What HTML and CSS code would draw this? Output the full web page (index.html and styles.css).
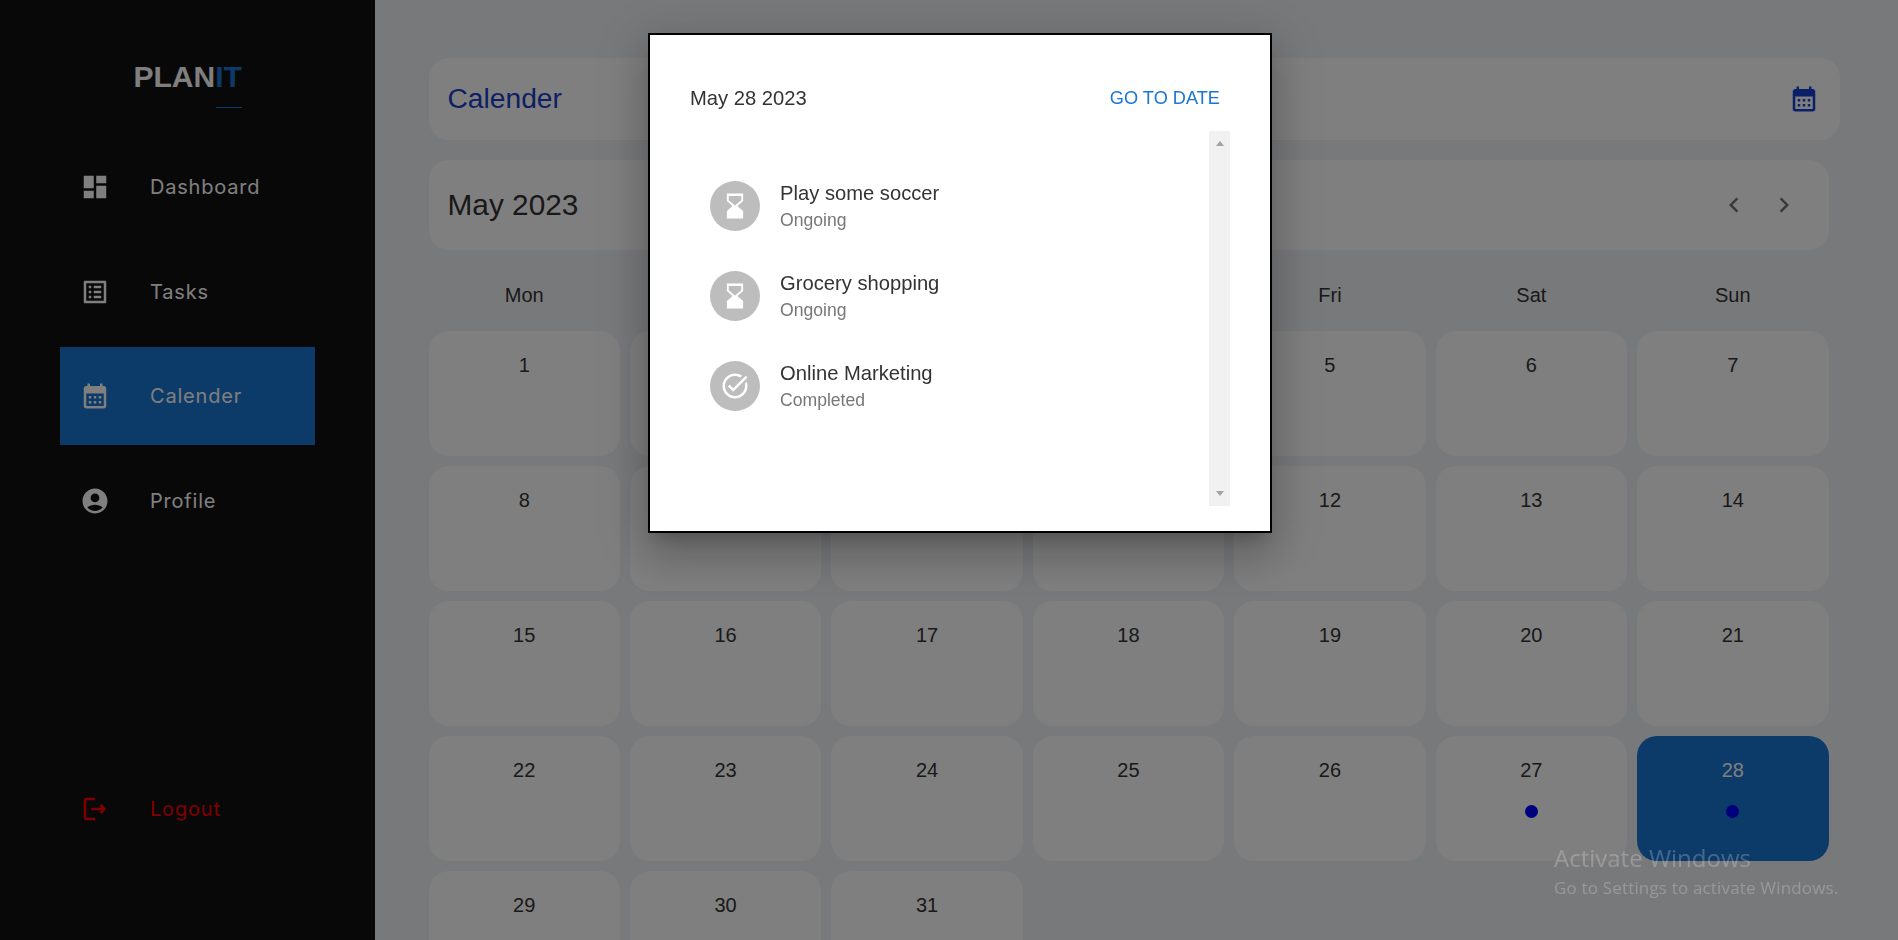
FILE: index.html
```html
<!DOCTYPE html>
<html lang="en">
<head>
    <meta charset="UTF-8">
    <meta name="viewport" content="width=device-width, initial-scale=1.0">
    <title>Planit - Calender</title>
    <link rel="stylesheet" href="styles.css">
</head>
<body>
    <aside class="sidebar">
        <div class="logo">
            <div class="logo-text">PLAN<span class="logo-accent">IT</span></div>
            <div class="logo-rule"></div>
        </div>
        <nav class="nav">
            <a class="nav-item" href="#">
                <svg class="icon" viewBox="0 0 24 24"><path d="M3 13h8V3H3v10zm0 8h8v-6H3v6zm10 0h8V11h-8v10zm0-18v6h8V3h-8z"/></svg>
                <span>Dashboard</span>
            </a>
            <a class="nav-item" href="#">
                <svg class="icon" viewBox="0 0 24 24"><path d="M19 5v14H5V5h14m1.1-2H3.9c-.5 0-.9.4-.9.9v16.2c0 .4.4.9.9.9h16.2c.4 0 .9-.5.9-.9V3.9c0-.5-.5-.9-.9-.9zM11 7h6v2h-6V7zm0 4h6v2h-6v-2zm0 4h6v2h-6zM7 7h2v2H7zm0 4h2v2H7zm0 4h2v2H7z"/></svg>
                <span>Tasks</span>
            </a>
            <a class="nav-item active" href="#">
                <svg class="icon" viewBox="0 0 24 24"><path d="M19 4h-1V2h-2v2H8V2H6v2H5c-1.11 0-1.99.9-1.99 2L3 20c0 1.1.89 2 2 2h14c1.1 0 2-.9 2-2V6c0-1.1-.9-2-2-2zm0 16H5V10h14v10zM9 14H7v-2h2v2zm4 0h-2v-2h2v2zm4 0h-2v-2h2v2zm-8 4H7v-2h2v2zm4 0h-2v-2h2v2zm4 0h-2v-2h2v2z"/></svg>
                <span>Calender</span>
            </a>
            <a class="nav-item" href="#">
                <svg class="icon" viewBox="0 0 24 24"><path d="M12 2C6.48 2 2 6.48 2 12s4.48 10 10 10 10-4.48 10-10S17.52 2 12 2zm0 4c1.93 0 3.5 1.57 3.5 3.5S13.93 13 12 13s-3.5-1.57-3.5-3.5S10.07 6 12 6zm0 14c-2.03 0-4.43-.82-6.14-2.88C7.55 15.8 9.68 15 12 15s4.45.8 6.14 2.12C16.43 19.18 14.03 20 12 20z"/></svg>
                <span>Profile</span>
            </a>
        </nav>
        <a class="nav-item logout" href="#">
            <svg class="icon" viewBox="0 0 24 24"><path d="M17 8l-1.41 1.41L17.17 11H9v2h8.17l-1.58 1.58L17 16l4-4-4-4zM5 5h7V3H5c-1.1 0-2 .9-2 2v14c0 1.1.9 2 2 2h7v-2H5V5z"/></svg>
            <span>Logout</span>
        </a>
    </aside>

    <main class="main">
        <header class="page-header">
            <h1 class="page-title">Calender</h1>
            <svg class="icon page-icon" viewBox="0 0 24 24"><path d="M19 4h-1V2h-2v2H8V2H6v2H5c-1.11 0-1.99.9-1.99 2L3 20c0 1.1.89 2 2 2h14c1.1 0 2-.9 2-2V6c0-1.1-.9-2-2-2zm0 16H5V10h14v10zM9 14H7v-2h2v2zm4 0h-2v-2h2v2zm4 0h-2v-2h2v2zm-8 4H7v-2h2v2zm4 0h-2v-2h2v2zm4 0h-2v-2h2v2z"/></svg>
        </header>

        <section class="month-bar">
            <h2 class="month-title">May 2023</h2>
            <div class="month-nav">
                <button class="icon-button" type="button"><svg class="icon" viewBox="0 0 24 24"><path d="M15.41 7.41 14 6l-6 6 6 6 1.41-1.41L10.83 12z"/></svg></button>
                <button class="icon-button" type="button"><svg class="icon" viewBox="0 0 24 24"><path d="M10 6 8.59 7.41 13.17 12l-4.58 4.59L10 18l6-6z"/></svg></button>
            </div>
        </section>

        <div class="weekdays">
            <div>Mon</div><div>Tue</div><div>Wed</div><div>Thu</div><div>Fri</div><div>Sat</div><div>Sun</div>
        </div>

        <div class="days">
            <div class="day">1</div><div class="day">2</div><div class="day">3</div><div class="day">4</div><div class="day">5</div><div class="day">6</div><div class="day">7</div>
            <div class="day">8</div><div class="day">9</div><div class="day">10</div><div class="day">11</div><div class="day">12</div><div class="day">13</div><div class="day">14</div>
            <div class="day">15</div><div class="day">16</div><div class="day">17</div><div class="day">18</div><div class="day">19</div><div class="day">20</div><div class="day">21</div>
            <div class="day">22</div><div class="day">23</div><div class="day">24</div><div class="day">25</div><div class="day">26</div>
            <div class="day">27<span class="dot"></span></div>
            <div class="day selected">28<span class="dot"></span></div>
            <div class="day">29</div><div class="day">30</div><div class="day">31</div>
        </div>
    </main>

    <div class="backdrop"></div>

    <div class="modal">
        <div class="modal-header">
            <span class="modal-date">May 28 2023</span>
            <a class="go-to-date" href="#">GO TO DATE</a>
        </div>
        <div class="modal-body">
            <ul class="task-list">
                <li class="task">
                    <div class="avatar"><svg class="icon" viewBox="0 0 24 24"><path fill-rule="evenodd" d="M5.5 2h13v6L14 12l4.500 4v6h-13v-6L10 12 5.500 8zM7 4v3.300l5 4.300 5-4.300V4z"/></svg></div>
                    <div>
                        <div class="task-name">Play some soccer</div>
                        <div class="task-status">Ongoing</div>
                    </div>
                </li>
                <li class="task">
                    <div class="avatar"><svg class="icon" viewBox="0 0 24 24"><path fill-rule="evenodd" d="M5.500 2h13v6L14 12l4.500 4v6h-13v-6L10 12 5.500 8zM7 4v3.300l5 4.300 5-4.300V4z"/></svg></div>
                    <div>
                        <div class="task-name">Grocery shopping</div>
                        <div class="task-status">Ongoing</div>
                    </div>
                </li>
                <li class="task">
                    <div class="avatar"><svg class="icon" viewBox="0 0 24 24"><path d="M22 5.18 10.59 16.6l-4.24-4.24 1.41-1.41 2.83 2.83 10-10L22 5.18zm-2.21 5.04c.13.57.21 1.17.21 1.78 0 4.42-3.58 8-8 8s-8-3.58-8-8 3.58-8 8-8c1.58 0 3.04.46 4.28 1.25l1.44-1.44C16.1 2.67 14.13 2 12 2 6.48 2 2 6.48 2 12s4.48 10 10 10 10-4.48 10-10c0-1.19-.22-2.33-.6-3.39l-1.61 1.61z"/></svg></div>
                    <div>
                        <div class="task-name">Online Marketing</div>
                        <div class="task-status">Completed</div>
                    </div>
                </li>
            </ul>
            <div class="scroll-track">
                <span class="arrow-up"></span>
                <span class="arrow-down"></span>
            </div>
        </div>
    </div>

    <div class="watermark">
        <div class="watermark-title">Activate Windows</div>
        <div class="watermark-text">Go to Settings to activate Windows.</div>
    </div>
</body>
</html>
```

FILE: styles.css
```css
* {
    box-sizing: border-box;
}
html {
    height: 940px;
    overflow: hidden;
}
body {
    margin: 0;
    display: flex;
    height: 940px;
    overflow: hidden;
    font-family: "Liberation Sans", Arial, sans-serif;
    background-color: #f0f2f6;
    color: #333;
}
.icon {
    display: block;
    width: 30px;
    height: 30px;
    fill: currentColor;
    flex-shrink: 0;
}

/* sidebar */
.sidebar {
    width: 375px;
    flex-shrink: 0;
    display: flex;
    flex-direction: column;
    align-items: center;
    padding-top: 60px;
    padding-bottom: 82px;
    background-color: #101010;
}
.logo {
    width: 108px;
    height: 78px;
}
.logo-text {
    font-size: 30px;
    font-weight: bold;
    line-height: 34px;
    color: #fff;
}
.logo-accent {
    color: #1976d2;
}
.logo-rule {
    width: 26px;
    height: 1px;
    margin: 13px 0 0 auto;
    background-color: #1976d2;
}
.nav {
    display: flex;
    flex-direction: column;
    gap: 6.5px;
}
.nav-item {
    display: flex;
    align-items: center;
    gap: 40px;
    width: 255px;
    height: 98px;
    padding-left: 20px;
    font-family: Inter, "Liberation Sans", sans-serif;
    font-size: 20px;
    letter-spacing: 0.8px;
    color: #fff;
    text-decoration: none;
}
.nav-item.active {
    background-color: #1976d2;
}
.logout {
    margin-top: auto;
    color: #f00;
}

/* main area */
.main {
    flex: 1;
    height: 940px;
    overflow: hidden;
    padding: 58px 58px 0 53.5px;
}
.page-header {
    display: flex;
    align-items: center;
    justify-content: space-between;
    height: 82px;
    padding: 0 21px 0 19px;
    border-radius: 20px;
    background-color: #fff;
}
.page-title {
    margin: -2px 0 0;
    font-size: 28.2px;
    font-weight: normal;
    color: #1c3fc8;
}
.page-icon {
    color: #1440d0;
}
.month-bar {
    display: flex;
    align-items: center;
    justify-content: space-between;
    height: 90px;
    margin: 20px 11px 0 0;
    padding: 0 20px 0 19px;
    border-radius: 20px;
    background-color: #fff;
}
.month-title {
    margin: 0;
    font-size: 29.8px;
    font-weight: normal;
}
.month-nav {
    display: flex;
}
.icon-button {
    padding: 10px;
    border: 0;
    background: none;
    color: rgba(0, 0, 0, 0.54);
}
.weekdays, .days {
    display: grid;
    grid-template-columns: repeat(7, 1fr);
    column-gap: 10px;
    margin-right: 11.5px;
}
.weekdays {
    margin-top: 25px;
    margin-bottom: 16px;
    text-align: center;
    font-size: 20px;
    line-height: 40px;
}
.days {
    grid-auto-rows: 125px;
    row-gap: 10px;
}
.day {
    display: flex;
    flex-direction: column;
    align-items: center;
    padding-top: 23px;
    border-radius: 20px;
    background-color: #fff;
    font-size: 20px;
    line-height: 23px;
}
.day.selected {
    background-color: #1976d2;
    color: #fff;
}
.dot {
    width: 13px;
    height: 13px;
    margin-top: 23px;
    border-radius: 50%;
    background-color: #00f;
}

/* modal */
.backdrop {
    position: fixed;
    inset: 0;
    background-color: rgba(0, 0, 0, 0.5);
}
.modal {
    position: absolute;
    left: 648px;
    top: 33px;
    width: 624px;
    height: 500px;
    padding: 40px 40px 25px;
    border: 2px solid #000;
    background-color: #fff;
    box-shadow: 0 11px 15px -7px rgba(0, 0, 0, 0.2), 0 24px 38px 3px rgba(0, 0, 0, 0.14), 0 9px 46px 8px rgba(0, 0, 0, 0.12);
}
.modal-header {
    display: flex;
    align-items: center;
    justify-content: space-between;
    height: 47px;
    margin-bottom: 9px;
}
.modal-date {
    font-size: 20.2px;
    color: #333;
}
.go-to-date {
    padding: 10px;
    font-size: 18.2px;
    color: #1976d2;
    text-decoration: none;
}
.modal-body {
    display: flex;
    justify-content: space-between;
    height: 375px;
}
.task-list {
    margin: 0;
    padding: 50px 0 0 20px;
    list-style: none;
}
.task {
    display: flex;
    align-items: center;
    gap: 20px;
    height: 50px;
    margin-bottom: 40px;
}
.avatar {
    display: flex;
    align-items: center;
    justify-content: center;
    width: 50px;
    height: 50px;
    border-radius: 50%;
    background-color: #bdbdbd;
    color: #fff;
}
.task-name {
    margin-top: -2px;
    font-size: 20.2px;
    line-height: 24px;
    color: #333;
}
.task-status {
    margin-top: 5px;
    font-size: 17.6px;
    line-height: 20px;
    color: #777;
}
.scroll-track {
    display: flex;
    flex-direction: column;
    align-items: center;
    justify-content: space-between;
    width: 21px;
    padding: 10px 0;
    background-color: #f1f1f1;
}
.arrow-up, .arrow-down {
    width: 0;
    height: 0;
    border-left: 4.5px solid transparent;
    border-right: 4.5px solid transparent;
}
.arrow-up {
    border-bottom: 5px solid #a3a3a3;
}
.arrow-down {
    border-top: 5px solid #a3a3a3;
}

/* windows watermark, sits on top of everything */
.watermark {
    position: absolute;
    left: 1554px;
    top: 841px;
    font-family: "Open Sans", sans-serif;
    color: rgba(255, 255, 255, 0.23);
    pointer-events: none;
}
.watermark-title {
    font-size: 24px;
    line-height: 34px;
}
.watermark-text {
    font-size: 17px;
    line-height: 25px;
    letter-spacing: 0.17px;
}
```
